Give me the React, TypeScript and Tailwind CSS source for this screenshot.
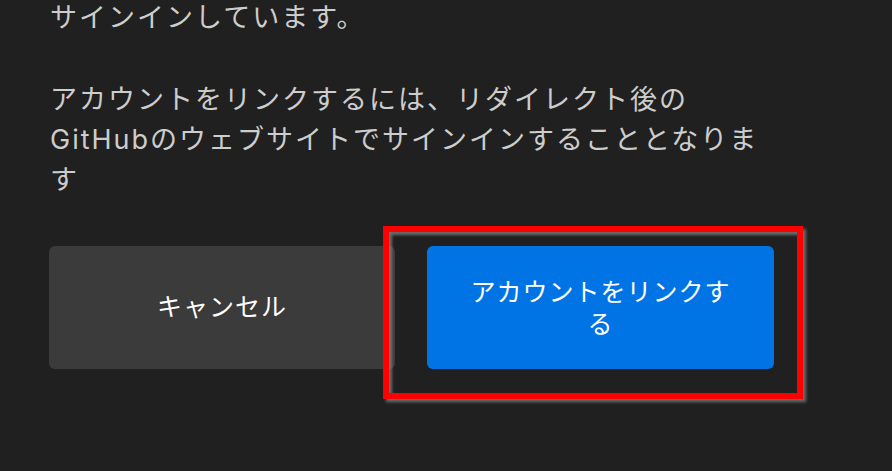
const font = {
  fontFamily: '"Inter", "Noto Sans CJK JP", sans-serif',
};

export default function App() {
  return (
    <div
      className="h-[471px] w-[892px] overflow-hidden bg-[#202020] px-[50px] text-[#cdcdcd]"
      style={font}
    >
      <p className="-mt-[2px] text-[27px] leading-[40px] tracking-[2px]">
        サインインしています。
      </p>
      <p className="mt-[42px] text-[27px] leading-[40px] tracking-[2px]">
        アカウントをリンクするには、リダイレクト後の
        <br />
        GitHubのウェブサイトでサインインすることとなりま
        <br />す
      </p>

      <div className="mt-[46px] flex gap-[32px] pl-0">
        <button className="-ml-px flex h-[123px] w-[346px] items-center justify-center rounded-md bg-[#3b3b3b] text-[25px] tracking-[1px] text-white">
          キャンセル
        </button>

        <div className="relative">
          <button className="flex h-[123px] w-[347px] items-center justify-center rounded-md bg-[#0074e4] px-10 text-[25px] leading-[32px] tracking-[1px] text-white">
            アカウントをリンクす
            <br />る
          </button>
          {/* annotation frame */}
          <div className="pointer-events-none absolute -top-[20px] -left-[44px] h-[173px] w-[420px] border-[6px] border-[#ff0000] shadow-[3px_3px_3px_rgba(140,140,140,0.7),inset_3px_3px_3px_rgba(140,140,140,0.7)]" />
        </div>
      </div>
    </div>
  );
}
